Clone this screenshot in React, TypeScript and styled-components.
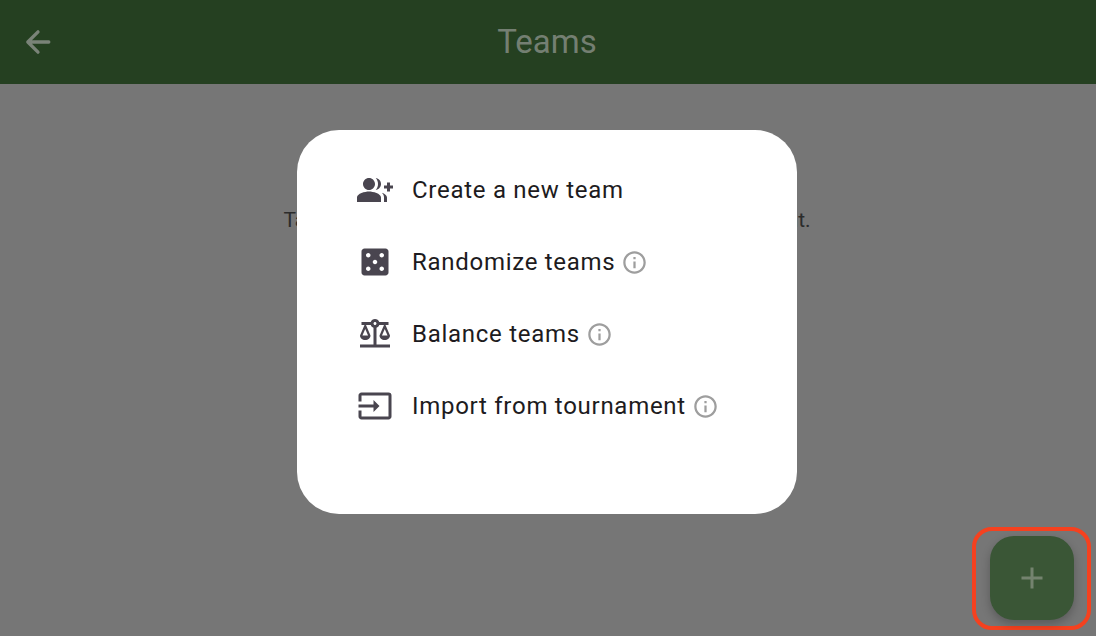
import React from "react";
import styled, { createGlobalStyle } from "styled-components";
import { MdAdd, MdBalance, MdCasino, MdGroupAdd, MdInfoOutline, MdInput } from "react-icons/md";
import type { IconType } from "react-icons";

const GlobalStyle = createGlobalStyle`
  * { box-sizing: border-box; }
  body {
    margin: 0;
    background: #767676;
    font-family: Roboto, "Liberation Sans", sans-serif;
  }
`;

const Page = styled.div`
  min-height: 100vh;
  background: #767676;
`;

const Header = styled.header`
  display: grid;
  grid-template-columns: 84px 1fr 84px;
  align-items: center;
  height: 84px;
  padding-right: 2px;
  background: #254021;
  color: #747f72;
`;

const BackButton = styled.button`
  display: flex;
  width: 60px;
  height: 60px;
  margin-left: 8px;
  padding: 12px;
  border: 0;
  background: none;
  color: #7a8378;
`;

const Title = styled.h1`
  margin: 0;
  font-size: 33px;
  line-height: 40px;
  font-weight: 400;
  text-align: center;
`;

const Hint = styled.p`
  margin: 0;
  padding: 122px 26px 0 24px;
  color: #2c2c2c;
  font-size: 21px;
  line-height: 28px;
  text-align: center;
`;

const Overlay = styled.div`
  position: fixed;
  inset: 0;
  display: flex;
  align-items: center;
  justify-content: center;
  padding: 8px 18px 0 16px;
`;

const Dialog = styled.div`
  width: 100%;
  max-width: 500px;
  padding: 24px 42px 60px;
  border-radius: 42px;
  background: #ffffff;
`;

const Menu = styled.ul`
  margin: 0;
  padding: 0 0 12px;
  list-style: none;
`;

const MenuItem = styled.li`
  display: flex;
  align-items: center;
  gap: 6px;
  height: 72px;
  padding-left: 18px;
`;

const Action = styled.button`
  display: flex;
  align-items: center;
  gap: 19px;
  padding: 0;
  border: 0;
  background: none;
  color: #1d1b20;
  font: inherit;
  font-size: 24px;
  line-height: 36px;
  letter-spacing: 0.03em;
  white-space: nowrap;

  svg { color: #49454f; }
`;

const InfoButton = styled.button`
  display: flex;
  padding: 0;
  border: 0;
  background: none;
  color: #9e9e9e;
`;

const Highlight = styled.div`
  position: fixed;
  right: 5px;
  bottom: 6px;
  padding: 5px 13px 6px 14px;
  border: 4px solid #f5411f;
  border-radius: 20px;
`;

const AddButton = styled.button`
  display: flex;
  align-items: center;
  justify-content: center;
  width: 84px;
  height: 84px;
  border: 0;
  border-radius: 24px;
  background: #3a5636;
  color: #74836f;
  box-shadow: 0 4px 10px rgba(0, 0, 0, 0.24);
`;

const items: { label: string; icon: IconType; info: boolean }[] = [
  { label: "Create a new team", icon: MdGroupAdd, info: false },
  { label: "Randomize teams", icon: MdCasino, info: true },
  { label: "Balance teams", icon: MdBalance, info: true },
  { label: "Import from tournament", icon: MdInput, info: true },
];

export default function App() {
  return (
    <Page>
      <GlobalStyle />
      <Header>
        <BackButton type="button" aria-label="Back">
          <svg width="36" height="36" viewBox="0 0 24 24" fill="none" stroke="currentColor" strokeWidth="2.2" strokeLinecap="round" strokeLinejoin="round" aria-hidden="true">
            <path d="M19.2 12H5.5M12 5.2 5.2 12l6.8 6.8" />
          </svg>
        </BackButton>
        <Title>Teams</Title>
      </Header>
      <main>
        <Hint>Tap the plus button to create a team for this tournament.</Hint>
      </main>
      <Highlight>
        <AddButton type="button" aria-label="Add team">
          <MdAdd size={36} />
        </AddButton>
      </Highlight>
      <Overlay>
        <Dialog role="dialog" aria-modal="true" aria-label="Team actions">
          <Menu>
            {items.map(({ label, icon: Icon, info }) => (
              <MenuItem key={label}>
                <Action type="button">
                  <Icon size={36} />
                  {label}
                </Action>
                {info && (
                  <InfoButton type="button" aria-label={`About: ${label}`}>
                    <MdInfoOutline size={27} />
                  </InfoButton>
                )}
              </MenuItem>
            ))}
          </Menu>
        </Dialog>
      </Overlay>
    </Page>
  );
}
